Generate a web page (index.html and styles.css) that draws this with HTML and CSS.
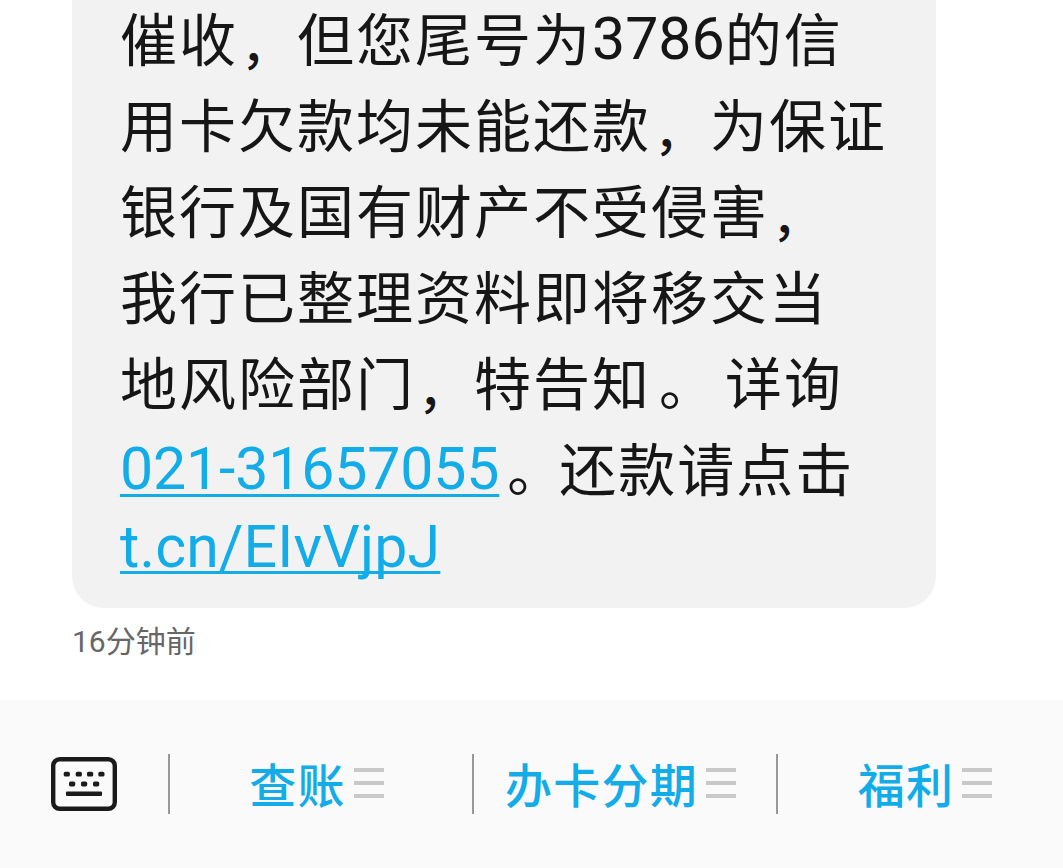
FILE: index.html
```
<!DOCTYPE html>
<html lang="zh-CN">
<head>
    <meta charset="UTF-8">
    <meta name="viewport" content="width=device-width, initial-scale=1.0">
    <title>短信</title>
    <link rel="stylesheet" href="styles.css">
</head>
<body>
    <main class="messages">
        <div class="bubble">
            <p>催收<span class="comma">，</span>但您尾号为<span class="num">3786</span>的信</p>
            <p>用卡欠款均未能还款<span class="comma">，</span>为保证</p>
            <p>银行及国有财产不受侵害<span class="comma">，</span></p>
            <p>我行已整理资料即将移交当</p>
            <p>地风险部门<span class="comma">，</span>特告知<span class="stop wide">。</span>详询</p>
            <p><a class="phone" href="tel:02131657055">021-31657055</a><span class="stop">。</span>还款请点击</p>
            <p class="latin"><a class="url" href="#">t.cn/EIvVjpJ</a></p>
        </div>
        <div class="time">16分钟前</div>
    </main>

    <nav class="toolbar">
        <button class="keyboard" aria-label="键盘">
            <svg width="68" height="56" viewBox="0 0 68 56">
                <rect x="3.2" y="3.2" width="61.6" height="49.6" rx="6.5" fill="none" stroke="#1a1a1a" stroke-width="4.4"/>
                <g fill="#1a1a1a">
                    <rect x="13.7" y="15.8" width="6.2" height="4.8" rx="1.6"/>
                    <rect x="25.7" y="15.8" width="6.2" height="4.8" rx="1.6"/>
                    <rect x="37" y="15.8" width="6.2" height="4.8" rx="1.6"/>
                    <rect x="48.3" y="15.8" width="6.2" height="4.8" rx="1.6"/>
                    <rect x="19" y="25.6" width="6.2" height="4.8" rx="1.6"/>
                    <rect x="31" y="25.6" width="6.2" height="4.8" rx="1.6"/>
                    <rect x="43" y="25.6" width="6.2" height="4.8" rx="1.6"/>
                    <rect x="16" y="35.4" width="36" height="4.7" rx="1"/>
                </g>
            </svg>
        </button>
        <button class="item"><span>查账</span><i class="lines"></i></button>
        <button class="item"><span>办卡分期</span><i class="lines"></i></button>
        <button class="item last"><span>福利</span><i class="lines"></i></button>
    </nav>
</body>
</html>
```

FILE: styles.css
```
* {
    box-sizing: border-box;
}

body {
    margin: 0;
    height: 868px;
    display: flex;
    flex-direction: column;
    overflow: hidden;
    background-color: #fff;
    font-family: Roboto, "Noto Sans CJK SC", sans-serif;
}

.messages {
    height: 700px;
    padding-left: 72px;
}

.bubble {
    width: 864px;
    height: 608px;
    padding-top: 1px;
    padding-left: 48px;
    background-color: #f2f2f2;
    border-radius: 0 0 32px 32px;
    color: #161616;
    font-size: 57px;
    letter-spacing: 2px;
    white-space: nowrap;
}

.bubble p {
    margin: 0;
    height: 86px;
    line-height: 82px;
}

.bubble .latin {
    line-height: 66px;
}

.num,
.bubble a {
    font-size: 59px;
    line-height: 1;
    letter-spacing: 0;
    vertical-align: 2px;
}

.bubble a {
    color: #12ace8;
    text-decoration: underline;
    text-decoration-thickness: 3px;
    text-decoration-skip-ink: none;
    text-underline-offset: 5px;
}

.bubble .phone {
    letter-spacing: -0.15px;
}

.bubble .url {
    letter-spacing: 0.18px;
    text-underline-offset: 4px;
}

.comma {
    display: inline-block;
    width: 59px;
    padding-left: 3px;
    font-size: 48px;
    font-weight: 500;
    line-height: 1;
    vertical-align: -3px;
}

.stop {
    display: inline-block;
    width: 60px;
    padding-left: 8px;
    font-size: 55px;
    line-height: 1;
}

.stop.wide {
    width: 74px;
}

.time {
    margin-top: 13px;
    color: #666;
    font-size: 30px;
    line-height: 42px;
}

.toolbar {
    flex: 1;
    display: flex;
    align-items: center;
    background-color: #fafafa;
}

button {
    padding: 0;
    border: 0;
    background: none;
    font: inherit;
}

.keyboard {
    width: 168px;
    height: 60px;
    padding-left: 50px;
    text-align: left;
}

.keyboard svg {
    display: block;
}

.item {
    width: 304px;
    height: 60px;
    display: flex;
    align-items: center;
    justify-content: center;
    gap: 8px;
    padding: 0 9px 2px 0;
    border-left: 2px solid #999;
    color: #12ace8;
    font-size: 47px;
    font-weight: 500;
    letter-spacing: 1.2px;
}

.item span {
    line-height: 56px;
    margin-top: 7px;
}

.item.last {
    width: 287px;
    padding: 0 0 2px 9px;
}

.lines {
    width: 30px;
    height: 30px;
    border-top: 4px solid #c9c9c9;
    border-bottom: 4px solid #c9c9c9;
    background: linear-gradient(#c9c9c9, #c9c9c9) center / 100% 4px no-repeat;
}
```
